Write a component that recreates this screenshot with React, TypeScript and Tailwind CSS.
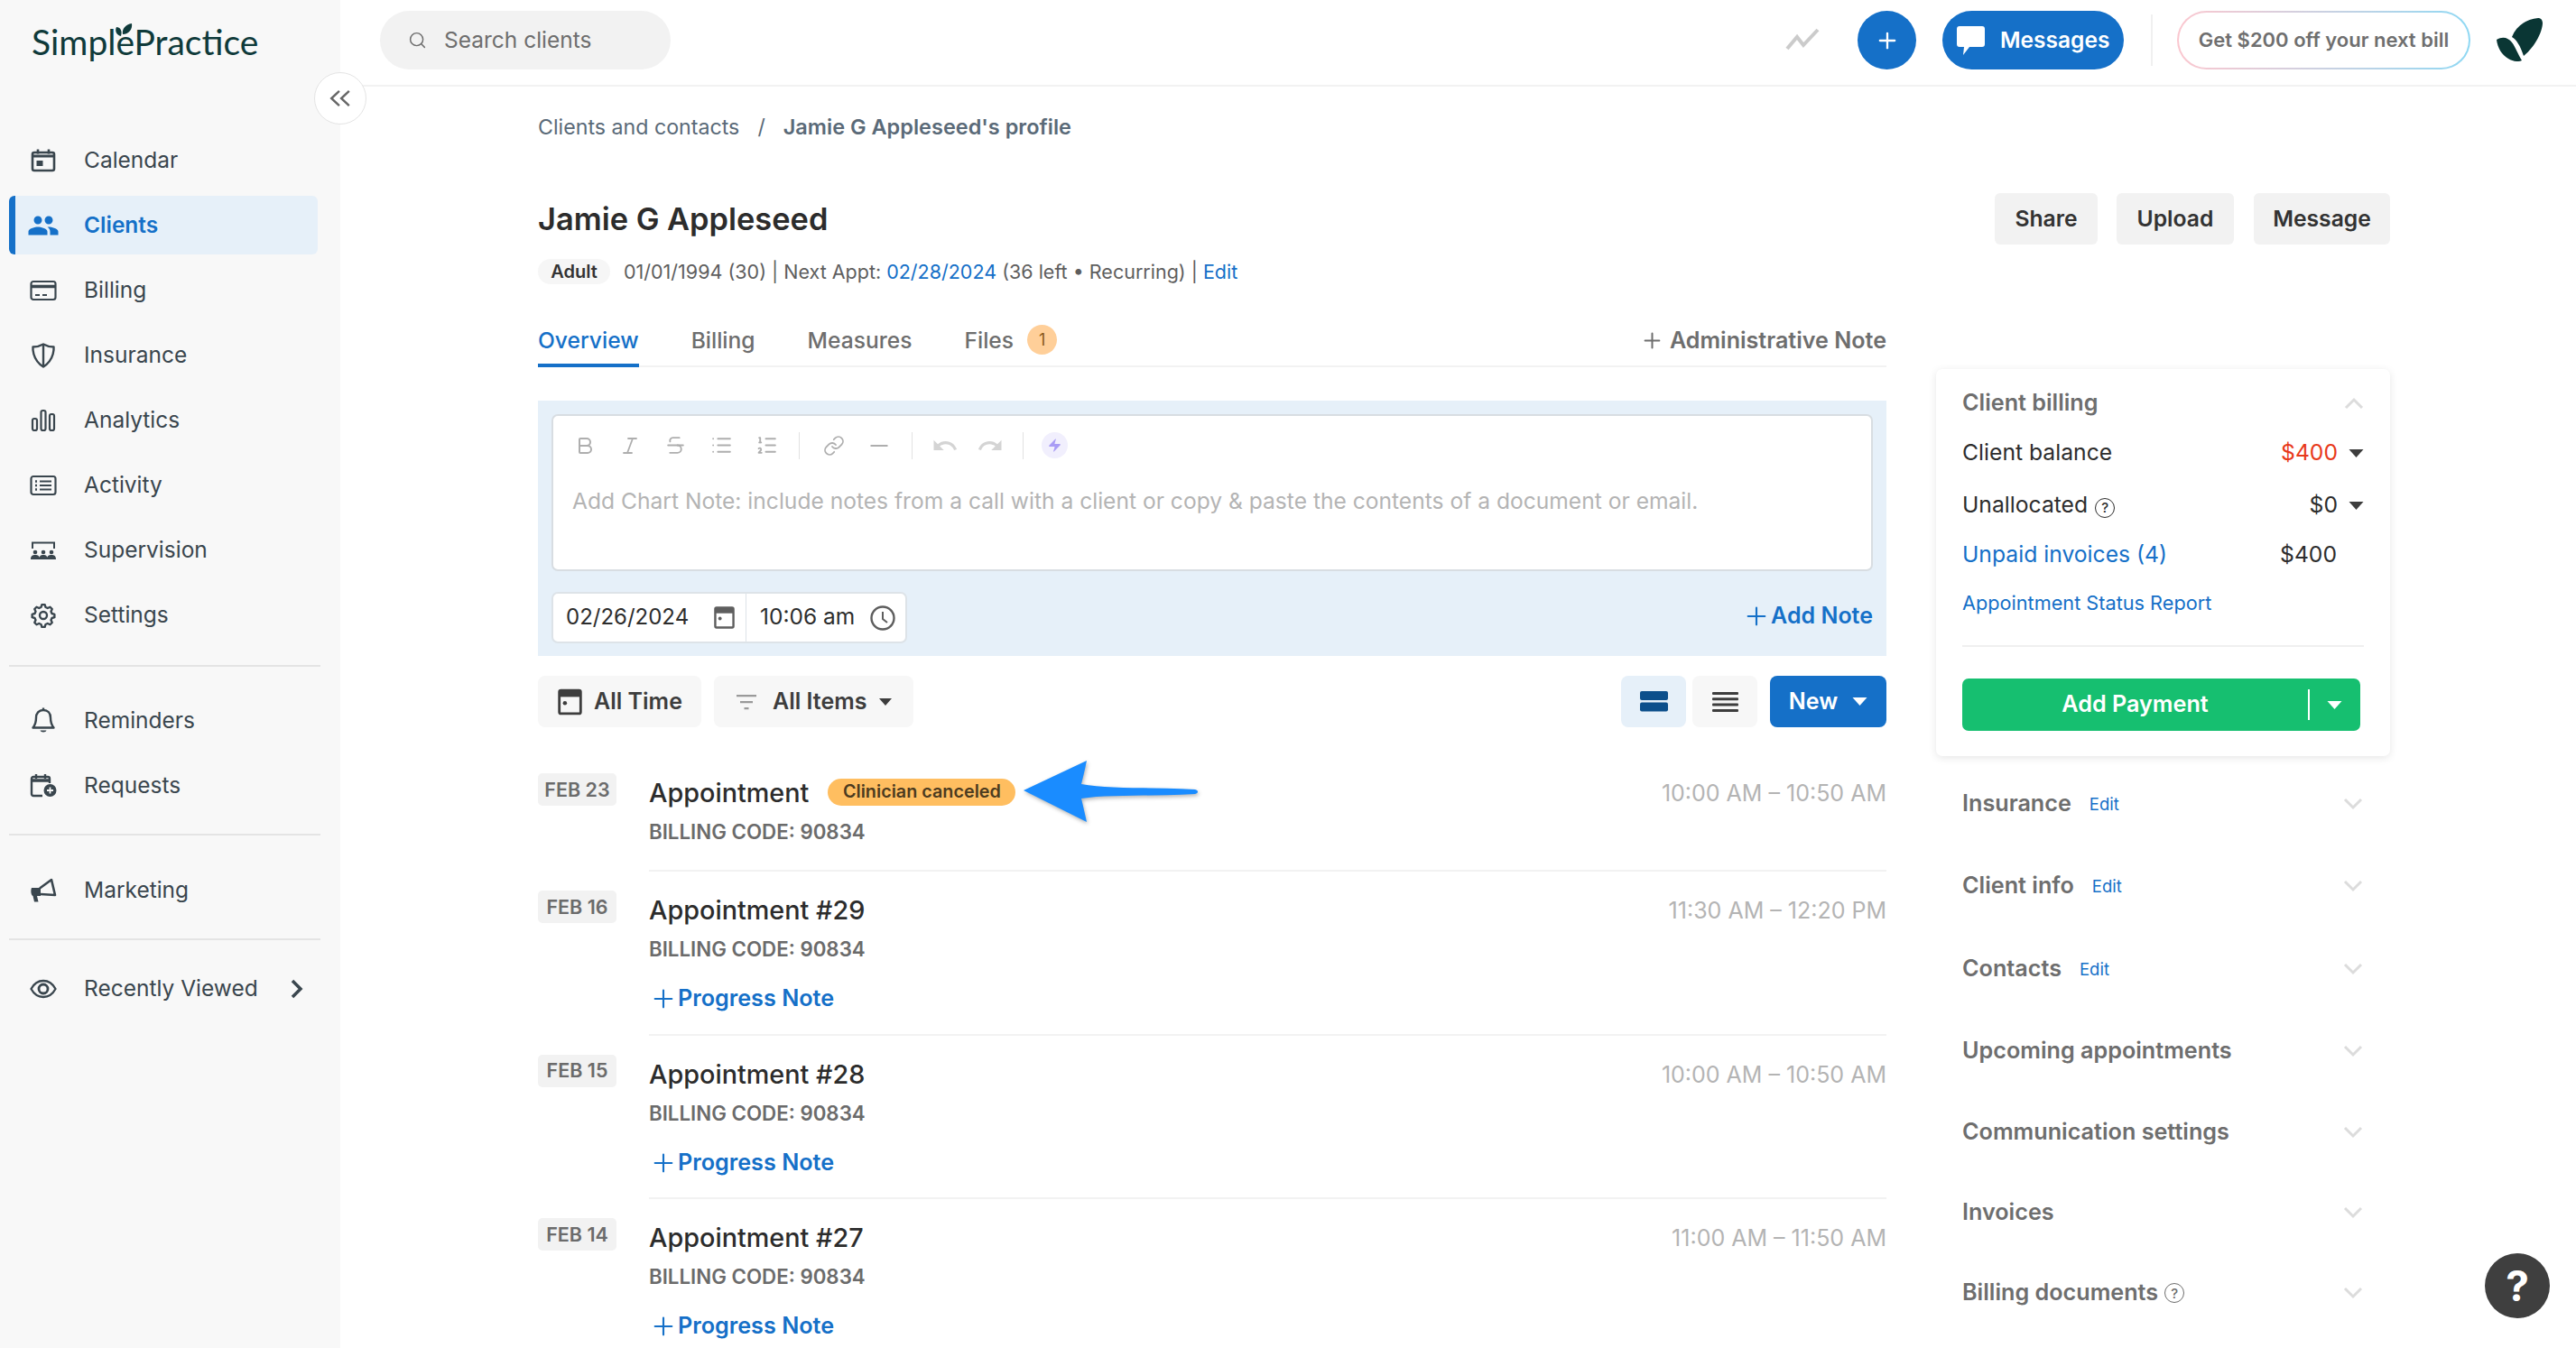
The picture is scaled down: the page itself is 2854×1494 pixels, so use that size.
import { Bold, Italic, Link, List, ListOrdered, Minus, Plus, Search, Strikethrough, Zap } from "lucide-react";
import { MdPeople, MdRedo, MdUndo } from "react-icons/md";
import type { ReactNode } from "react";

const CalendarIcon = () => (
  <svg width="28" height="28" viewBox="0 0 28 28" fill="none" stroke="currentColor" strokeWidth="2.6">
    <rect x="2" y="5" width="24" height="20" rx="2" />
    <path d="M2 9h24" strokeWidth="3" />
    <path d="M8 1.5v5M20 1.5v5" />
    <rect x="6.5" y="14" width="7" height="6" fill="currentColor" stroke="none" />
  </svg>
);

const CardIcon = () => (
  <svg width="30" height="28" viewBox="0 0 30 28" fill="none" stroke="currentColor" strokeWidth="2.2">
    <rect x="1.5" y="4" width="27" height="20" rx="2.5" />
    <path d="M1.5 9.5h27" strokeWidth="3.5" />
    <path d="M6 19h5M14 19h5" />
  </svg>
);

const ShieldIcon = () => (
  <svg width="28" height="28" viewBox="0 0 28 28" fill="none" stroke="currentColor" strokeWidth="2.4" strokeLinejoin="round">
    <path d="M14 1.5c-3.5 2-7.5 3-11.5 3 0 0-1.5 14 11.5 22 13-8 11.500-22 11.500-22-4 0-8-1-11.500-3z" />
    <path d="M14 1.5v25" />
  </svg>
);

const BarsIcon = () => (
  <svg width="28" height="28" viewBox="0 0 28 28" fill="none" stroke="currentColor" strokeWidth="2.2">
    <rect x="2" y="12" width="5" height="13" rx="2" />
    <rect x="11.5" y="3" width="5" height="22" rx="2" />
    <rect x="21" y="7" width="5" height="18" rx="2" />
  </svg>
);

const ActivityIcon = () => (
  <svg width="30" height="28" viewBox="0 0 30 28" fill="none" stroke="currentColor" strokeWidth="2.2">
    <rect x="1.5" y="4" width="27" height="20" rx="2.5" />
    <path d="M11 9.5h13M11 14h13M11 18.5h13" />
    <path d="M6 9.5h2M6 14h2M6 18.5h2" strokeWidth="2.6" />
  </svg>
);

const SupervisionIcon = () => (
  <svg width="30" height="28" viewBox="0 0 30 28" fill="currentColor">
    <path d="M3 12V5.500h24V12" fill="none" stroke="currentColor" strokeWidth="2" />
    <circle cx="6" cy="16" r="2.3" />
    <circle cx="15" cy="16" r="2.3" />
    <circle cx="24" cy="16" r="2.3" />
    <path d="M1 24c0-4 2-5 5-5s5 1 5 5zM10.5 24c0-4 1.500-5 4.500-5s4.500 1 4.500 5zM19 24c0-4 2-5 5-5s5 1 5 5z" />
  </svg>
);

const GearIcon = () => (
  <svg width="30" height="30" viewBox="0 0 24 24" fill="none" stroke="currentColor" strokeWidth="1.9" strokeLinejoin="round">
    <path d="M10.700 2.500h2.600l.7 2.300 1.800.8 2.200-1 1.800 1.800-1 2.200.8 1.800 2.300.7v2.600l-2.300.7-.8 1.800 1 2.200-1.800 1.800-2.200-1-1.800.8-.7 2.300h-2.600l-.7-2.300-1.800-.8-2.200 1-1.800-1.800 1-2.200-.8-1.800-2.300-.7v-2.600l2.300-.7.800-1.800-1-2.200 1.800-1.800 2.200 1 1.800-.8z" />
    <circle cx="12" cy="12" r="3.2" />
  </svg>
);

const BellIcon = () => (
  <svg width="28" height="30" viewBox="0 0 28 30" fill="none" stroke="currentColor" strokeWidth="2.4" strokeLinejoin="round">
    <path d="M14 3c-5 0-8 3.500-8 8.500 0 6-1.500 8.500-3.500 11h23c-2-2.500-3.500-5-3.500-11C22 6.500 19 3 14 3z" />
    <path d="M14 .5v3" />
    <path d="M10.5 25.500c.5 2.500 6.500 2.500 7 0z" fill="currentColor" stroke="none" />
  </svg>
);

const RequestIcon = () => (
  <svg width="30" height="28" viewBox="0 0 30 28" fill="none">
    <path d="M14 25H4a2 2 0 0 1-2-2V6a2 2 0 0 1 2-2h16a2 2 0 0 1 2 2v5" stroke="currentColor" strokeWidth="2.4" />
    <path d="M2 8h20" stroke="currentColor" strokeWidth="3.5" />
    <path d="M7 1v5M17 1v5" stroke="currentColor" strokeWidth="2.4" />
    <circle cx="22.5" cy="19" r="7" fill="currentColor" />
    <path d="M22.5 15.500v7M19 19h7" stroke="#f8f8f8" strokeWidth="1.8" />
  </svg>
);

const MegaphoneIcon = () => (
  <svg width="30" height="30" viewBox="0 0 30 30" fill="none">
    <path d="M2 12h10v9H8l1.500 6.500H5L3.500 21C1 20 1 14 2 12z" fill="currentColor" />
    <path d="M11 12.500L24 3l4 17-16-1" stroke="currentColor" strokeWidth="2.6" strokeLinejoin="round" />
  </svg>
);

const EyeIcon = () => (
  <svg width="30" height="28" viewBox="0 0 30 28" fill="none" stroke="currentColor" strokeWidth="2.3">
    <path d="M1.5 14C5 7.500 10 5 15 5s10 2.500 13.500 9C25 20.500 20 23 15 23S5 20.500 1.500 14z" />
    <circle cx="15" cy="14" r="5" strokeWidth="2.8" />
  </svg>
);

const CalendarSmall = ({ className }: { className: string }) => (
  <svg className={className} viewBox="0 0 24 26" fill="none" stroke="currentColor" strokeWidth="2.5">
    <rect x="1.5" y="1.500" width="21" height="23" rx="1.5" />
    <path d="M1.5 5h21" strokeWidth="6" />
    <circle cx="7" cy="14" r="2" fill="currentColor" stroke="none" />
  </svg>
);

const Caret = ({ className }: { className: string }) => (
  <svg className={className} viewBox="0 0 16 9" fill="currentColor">
    <path d="M0 0h16L8 9z" />
  </svg>
);

const Chevron = ({ up }: { up?: boolean }) => (
  <svg width="22" height="14" viewBox="0 0 22 14" fill="none" stroke="#dcdcdc" strokeWidth="3">
    <path d={up ? "M2 12l9-9 9 9" : "M2 2l9 9 9-9"} />
  </svg>
);

const HelpDot = () => (
  <span className="inline-flex h-[22px] w-[22px] items-center justify-center rounded-full border-[1.5px] border-current text-[15px] leading-none font-medium">?</span>
);

const navTop = [
  { label: "Calendar", icon: <CalendarIcon /> },
  { label: "Clients", icon: <MdPeople size={36} />, active: true },
  { label: "Billing", icon: <CardIcon /> },
  { label: "Insurance", icon: <ShieldIcon /> },
  { label: "Analytics", icon: <BarsIcon /> },
  { label: "Activity", icon: <ActivityIcon /> },
  { label: "Supervision", icon: <SupervisionIcon /> },
  { label: "Settings", icon: <GearIcon /> },
];

function NavItem({ label, icon, active, children }: { label: string; icon: ReactNode; active?: boolean; children?: ReactNode }) {
  return (
    <div
      className={`mb-[7px] ml-[10px] flex h-[65px] w-[342px] items-center rounded-[6px] ${
        active ? "border-l-[7px] border-[#1570c8] bg-[#e6f0f9] text-[#1570c8] font-semibold" : "text-[#3a464e]"
      }`}
    >
      <span className={`flex w-[38px] shrink-0 justify-center ${active ? "ml-[12px]" : "ml-[19px]"}`}>{icon}</span>
      <span className="ml-[26px] text-[24.5px] whitespace-nowrap">{label}</span>
      {children}
    </div>
  );
}

function Sidebar() {
  return (
    <aside className="relative flex w-[377px] shrink-0 flex-col bg-[#f8f8f8]">
      <div className="relative h-[145px] pt-[24px] pl-[35px]">
        <span className="text-[39px] leading-[44px] text-[#0f3a3a] [font-family:Lato,sans-serif]">SimplePractice</span>
        <svg className="absolute top-[25px] left-[125px]" width="22" height="16" viewBox="0 0 22 16" fill="#0f3a3a">
          <path d="M9 15C4 14 2 9 4 5c4 0 7 4 5 10zM11 13C10 7 14 2 21 1c1 6-3 12-10 12z" />
        </svg>
      </div>
      {navTop.map((item) => (
        <NavItem key={item.label} {...item} />
      ))}
      <div className="mt-[16px] ml-[10px] h-[2px] w-[345px] bg-[#e4e4e4]" />
      <div className="mt-[27px]">
        <NavItem label="Reminders" icon={<BellIcon />} />
        <NavItem label="Requests" icon={<RequestIcon />} />
      </div>
      <div className="mt-[14px] ml-[10px] h-[2px] w-[345px] bg-[#e4e4e4]" />
      <div className="mt-[28px]">
        <NavItem label="Marketing" icon={<MegaphoneIcon />} />
      </div>
      <div className="mt-[14px] ml-[10px] h-[2px] w-[345px] bg-[#e4e4e4]" />
      <div className="mt-[21px]">
        <NavItem label="Recently Viewed" icon={<EyeIcon />}>
          <svg className="ml-[36px]" width="14" height="22" viewBox="0 0 14 22" fill="none" stroke="#3a464e" strokeWidth="3.5">
            <path d="M2 2l9 9-9 9" />
          </svg>
        </NavItem>
      </div>
      <button className="absolute top-[80px] left-[348px] flex h-[58px] w-[58px] items-center justify-center rounded-full border border-[#e4e4e4] bg-white text-[#666]">
        <svg width="24" height="20" viewBox="0 0 22 18" fill="none" stroke="currentColor" strokeWidth="2.2">
          <path d="M10 1.500L2 9l8 7.500M20 1.500L12 9l8 7.500" />
        </svg>
      </button>
    </aside>
  );
}

function Header() {
  return (
    <header className="flex h-[96px] shrink-0 items-start border-b-2 border-[#f2f2f2] pt-[12px] pr-[37px] pl-[44px]">
      <div className="flex h-[65px] w-[322px] items-center rounded-full bg-[#f2f2f2] pl-[31px] text-[24.5px] text-[#6e6e6e]">
        <Search size={21} strokeWidth={1.7} />
        <span className="ml-[19px]">Search clients</span>
      </div>
      <svg className="mt-[18px] ml-auto" width="38" height="26" viewBox="0 0 38 26" fill="none" stroke="#cbcbcb" strokeWidth="4">
        <path d="M2 24l11-13 7 9L36 3" />
      </svg>
      <div className="ml-[42px] flex h-[65px] w-[65px] items-center justify-center rounded-full bg-[#1570c8] text-white">
        <Plus size={28} strokeWidth={2} />
      </div>
      <div className="ml-[29px] flex h-[65px] w-[201px] items-center rounded-full bg-[#1570c8] pl-[16px] text-[24.5px] font-semibold text-white">
        <svg width="31" height="34" viewBox="0 0 31 34" fill="white">
          <path d="M3 1h25a3 3 0 0 1 3 3v17a3 3 0 0 1-3 3H14l-7 9 1-9H3a3 3 0 0 1-3-3V4a3 3 0 0 1 3-3z" />
        </svg>
        <span className="ml-[17px]">Messages</span>
      </div>
      <div className="mt-[4px] ml-[30px] h-[57px] w-[2px] bg-[#f0f0f0]" />
      <div className="ml-[27px] h-[65px] w-[325px] rounded-full bg-linear-to-r from-[#fbc7cf] to-[#8ed8f3] p-[2px]">
        <div className="flex h-full items-center justify-center rounded-full bg-white text-[22px] font-semibold text-[#6f6f6f]">
          Get $200 off your next bill
        </div>
      </div>
      <svg className="mt-[8px] ml-[29px]" width="51" height="48" viewBox="0 0 51 48" fill="#0a3634">
        <path d="M46 0C34 1 22 8 17 21c5 3 9 9 13 21 8-6 20-22 21-36 0-4-2-6-5-6z" />
        <path d="M0 24c7-4 13-2 17 3 4 5 7 14 11 20-4 2-10 1-15-2C6 41 1 33 0 24z" />
      </svg>
    </header>
  );
}

const tools = [
  { key: "b", icon: <Bold size={24} strokeWidth={2} />, width: "w-[50px]" },
  { key: "i", icon: <Italic size={24} strokeWidth={1.8} />, width: "w-[49px]" },
  { key: "s", icon: <Strikethrough size={25} strokeWidth={1.8} />, width: "w-[52px]" },
  { key: "ul", icon: <List size={25} strokeWidth={1.8} />, width: "w-[50px]" },
  { key: "ol", icon: <ListOrdered size={25} strokeWidth={1.8} />, width: "w-[50px]" },
];

function Composer() {
  return (
    <div className="mt-[37px] h-[283px] bg-[#e6f0f9] px-[15px] pt-[15px]">
      <div className="h-[174px] rounded-[7px] border-2 border-[#d8dde2] bg-white">
        <div className="flex h-[65px] items-center pl-[10px] text-[#aeaeae]">
          {tools.map((t) => (
            <span key={t.key} className={`flex justify-center ${t.width}`}>
              {t.icon}
            </span>
          ))}
          <span className="ml-[11px] h-[30px] w-[1px] bg-[#e2e2e2]" />
          <span className="ml-[25px] flex w-[26px] justify-center">
            <Link size={24} strokeWidth={1.8} />
          </span>
          <span className="ml-[12px] flex w-[50px] justify-center">
            <Minus size={30} strokeWidth={1.6} />
          </span>
          <span className="ml-[11px] h-[30px] w-[1px] bg-[#e2e2e2]" />
          <span className="ml-[21px] flex w-[30px] justify-center text-[#d4d4d4]">
            <MdUndo size={34} />
          </span>
          <span className="ml-[20px] flex w-[30px] justify-center text-[#d4d4d4]">
            <MdRedo size={34} />
          </span>
          <span className="ml-[21px] h-[30px] w-[1px] bg-[#e2e2e2]" />
          <span className="ml-[20px] flex h-[29px] w-[29px] items-center justify-center rounded-full bg-[#f1effd] text-[#a99cf5]">
            <Zap size={17} fill="currentColor" strokeWidth={0} />
          </span>
        </div>
        <p className="pt-[12px] pl-[21px] text-[24.6px] leading-[34px] text-[#b4b4b4]">
          Add Chart Note: include notes from a call with a client or copy &amp; paste the contents of a document or email.
        </p>
      </div>
      <div className="mt-[23px] flex items-center justify-between">
        <div className="flex h-[57px] w-[394px] items-center rounded-[7px] border-2 border-[#dde3e8] bg-white text-[24.5px] text-[#2d2d2d]">
          <span className="ml-[14px] w-[164px] pb-[2px] text-[24px]">02/26/2024</span>
          <CalendarSmall className="h-[25px] w-[23px] text-[#5e5e5e]" />
          <span className="ml-[12px] h-full w-[1px] bg-[#dde3e8]" />
          <span className="ml-[15px] w-[122px] pb-[2px]">10:06 am</span>
          <svg width="28" height="28" viewBox="0 0 28 28" fill="none" stroke="#5e5e5e" strokeWidth="2.4">
            <circle cx="14" cy="14" r="12.5" />
            <path d="M14 7v8l5 4" strokeWidth="2" />
          </svg>
        </div>
        <span className="flex items-center pb-[4px] text-[25px] font-semibold text-[#1570c8]">
          <Plus size={32} strokeWidth={1.6} />
          Add Note
        </span>
      </div>
    </div>
  );
}

function Filters() {
  return (
    <div className="mt-[22px] flex h-[57px] text-[25px] font-semibold text-[#3d3d3d]">
      <div className="flex w-[181px] items-center rounded-[8px] bg-[#f7f7f7] pl-[22px]">
        <CalendarSmall className="h-[30px] w-[27px] text-[#3d3d3d]" />
        <span className="ml-[13px]">All Time</span>
      </div>
      <div className="ml-[14px] flex w-[221px] items-center rounded-[8px] bg-[#f7f7f7] pl-[24px]">
        <svg width="24" height="18" viewBox="0 0 24 18" fill="#9a9a9a">
          <path d="M1 1h22v2.200H1zM5 8h14v2.200H5zM9.500 15h5v2.200h-5z" />
        </svg>
        <span className="ml-[17px]">All Items</span>
        <Caret className="ml-[14px] h-[8px] w-[14px] text-[#3d3d3d]" />
      </div>
      <div className="ml-auto flex h-full w-[72px] items-center justify-center rounded-[8px] bg-[#e6f0f9]">
        <svg width="31" height="23" viewBox="0 0 31 23" fill="#0c4f8b">
          <rect width="31" height="10" rx="2" />
          <rect y="12.5" width="31" height="10" rx="2" />
        </svg>
      </div>
      <div className="ml-[7px] flex h-full w-[72px] items-center justify-center rounded-[8px] bg-[#f7f7f7]">
        <svg width="29" height="22" viewBox="0 0 29 22" fill="#3d3d3d">
          <rect width="29" height="3" rx="1" />
          <rect y="6.3" width="29" height="3" rx="1" />
          <rect y="12.6" width="29" height="3" rx="1" />
          <rect y="19" width="29" height="3" rx="1" />
        </svg>
      </div>
      <div className="ml-[14px] flex h-full w-[129px] items-center justify-center rounded-[8px] bg-[#1570c8] text-white">
        New
        <Caret className="ml-[16px] h-[9px] w-[17px] text-white" />
      </div>
    </div>
  );
}

const appts = [
  { date: "FEB 23", title: "Appointment", time: "10:00 AM – 10:50 AM", canceled: true },
  { date: "FEB 16", title: "Appointment #29", time: "11:30 AM – 12:20 PM" },
  { date: "FEB 15", title: "Appointment #28", time: "10:00 AM – 10:50 AM" },
  { date: "FEB 14", title: "Appointment #27", time: "11:00 AM – 11:50 AM" },
];

function ApptRow({ date, title, time, canceled }: { date: string; title: string; time: string; canceled?: boolean }) {
  return (
    <div className={`flex pt-[21px] ${canceled ? "h-[130px]" : "h-[181.5px]"}`}>
      <span className="flex h-[36px] w-[87px] shrink-0 items-center justify-center rounded-[5px] bg-[#f2f2f2] text-[21.5px] font-semibold text-[#6b6b6b]">
        {date}
      </span>
      <div className="-mt-[21px] ml-[36px] flex-1 border-b-2 border-[#f2f2f2] pt-[21px]">
        <div className="flex h-[44px] items-center">
          <span className="text-[28.8px] font-medium text-[#2c2c2c]">{title}</span>
          {canceled && (
            <span className="relative ml-[21px] flex h-[30px] w-[208px] -translate-y-[1px] items-center justify-center rounded-full bg-[#ffbe60] text-[19.8px] font-semibold text-[#4c3b1f]">
              Clinician canceled
              <svg className="absolute top-[-22px] left-[217px] drop-shadow-[1px_2px_2px_rgba(0,0,0,0.3)]" width="196" height="72" viewBox="0 0 196 72" fill="#1a8cff">
                <path d="M0 35L70 2c-2 10-4 18-6 26 30 6 80 3 126 6 4 1 4 4 0 5-46 3-96 0-126 5 2 8 4 17 6 26z" />
              </svg>
            </span>
          )}
          <span className="mt-[2px] ml-auto text-[25px] text-[#b4b4b4]">{time}</span>
        </div>
        <div className="mt-[6px] h-[30px] text-[22.3px] leading-[30px] font-semibold text-[#6b6b6b]">BILLING CODE: 90834</div>
        {!canceled && (
          <div className="mt-[24px] flex h-[32px] items-center text-[25.2px] font-semibold text-[#1570c8]">
            <Plus size={32} strokeWidth={1.6} />
            Progress Note
          </div>
        )}
      </div>
    </div>
  );
}

const sections = [
  { label: "Insurance", edit: true, height: "h-[91px]" },
  { label: "Client info", edit: true, height: "h-[91px]" },
  { label: "Contacts", edit: true, height: "h-[93px]" },
  { label: "Upcoming appointments", height: "h-[90px]" },
  { label: "Communication settings", height: "h-[89px]" },
  { label: "Invoices", height: "h-[89px]" },
  { label: "Billing documents", help: true, height: "h-[89px]" },
];

function BillingCard() {
  return (
    <div className="mt-[138px] h-[429px] rounded-[7px] pt-[19px] pr-[29px] pl-[29px] shadow-[0_2px_10px_rgba(0,0,0,0.1)]">
      <div className="flex h-[38px] items-center justify-between text-[25.2px] font-semibold text-[#6e6e6e]">
        Client billing
        <Chevron up />
      </div>
      <div className="mt-[18px] flex h-[36px] items-center justify-between text-[24.7px] text-[#2d2d2d]">
        Client balance
        <span className="flex items-center text-[#e8391a]">
          $400
          <Caret className="ml-[12px] h-[9px] w-[17px] text-[#3d3d3d]" />
        </span>
      </div>
      <div className="mt-[22px] flex h-[36px] items-center justify-between text-[24.7px] text-[#2d2d2d]">
        <span className="flex items-center">
          Unallocated
          <span className="ml-[8px]">
            <HelpDot />
          </span>
        </span>
        <span className="flex items-center">
          $0
          <Caret className="ml-[12px] h-[9px] w-[17px] text-[#3d3d3d]" />
        </span>
      </div>
      <div className="mt-[19px] flex h-[36px] items-center justify-between pr-[30px] text-[24.7px]">
        <span className="text-[#1570c8]">Unpaid invoices (4)</span>
        <span className="text-[#2d2d2d]">$400</span>
      </div>
      <div className="mt-[20px] text-[21.7px] leading-[30px] text-[#1570c8]">Appointment Status Report</div>
      <div className="mt-[32px] h-[2px] bg-[#f0f0f0]" />
      <div className="mt-[35px] flex h-[58px] w-[441px] items-center rounded-[7px] bg-[#16bf70] text-[25.2px] font-semibold text-white">
        <span className="w-[383px] text-center">Add Payment</span>
        <span className="h-[34px] w-[2px] bg-white" />
        <Caret className="ml-[19px] h-[9px] w-[17px] text-white" />
      </div>
    </div>
  );
}

export default function App() {
  return (
    <div className="relative flex h-[1494px] w-[2854px] overflow-hidden bg-white [font-family:Inter,sans-serif]">
      <Sidebar />
      <div className="flex min-w-0 flex-1 flex-col">
        <Header />
        <main className="ml-[219px] flex w-[2052px]">
          <div className="w-[1494px] shrink-0">
            <div className="mt-[29px] flex h-[32px] items-center text-[23.2px] text-[#5a6a78]">
              Clients and contacts
              <span className="mx-[20px] font-normal">/</span>
              <span className="text-[23.5px] font-semibold">Jamie G Appleseed's profile</span>
            </div>
            <h1 className="mt-[66px] text-[34.4px] leading-[40px] font-semibold text-[#2c2c2c]">Jamie G Appleseed</h1>
            <div className="mt-[24px] flex h-[28px] items-center text-[21.5px] text-[#5e5e5e]">
              <span className="flex h-[28px] w-[80px] items-center justify-center rounded-full bg-[#f6f6f6] text-[20px] font-semibold text-[#333]">Adult</span>
              <span className="ml-[15px]">
                01/01/1994 (30) | Next Appt: <span className="text-[#1570c8]">02/28/2024</span> (36 left • Recurring) | <span className="text-[#1570c8]">Edit</span>
              </span>
            </div>
            <div className="mt-[30px] flex h-[62px] items-start border-b-2 border-[#f2f2f2] text-[24.6px] font-medium text-[#6e6e6e]">
              <span className="-mb-[2px] flex h-[62px] items-start border-b-4 border-[#1570c8] pt-[14px] text-[#1570c8]">Overview</span>
              <span className="ml-[58px] pt-[14px]">Billing</span>
              <span className="ml-[58px] pt-[14px]">Measures</span>
              <span className="ml-[58px] pt-[14px]">Files</span>
              <span className="mt-[15px] ml-[15px] flex h-[33px] w-[33px] items-center justify-center rounded-full bg-[#ffcf99] text-[18px] font-normal text-[#8a5a1a]">1</span>
              <span className="ml-auto flex items-center pt-[14px] text-[25.1px] font-semibold">
                <Plus size={27} strokeWidth={1.8} className="mr-[6px]" />
                Administrative Note
              </span>
            </div>
            <Composer />
            <Filters />
            <div className="mt-[30px]">
              {appts.map((a) => (
                <ApptRow key={a.date} {...a} />
              ))}
            </div>
          </div>
          <div className="ml-[55px] w-[503px] shrink-0">
            <div className="mt-[118px] flex h-[57px] justify-end text-[24.7px] font-semibold text-[#333]">
              <span className="flex w-[114px] items-center justify-center rounded-[6px] bg-[#f2f2f2]">Share</span>
              <span className="ml-[21px] flex w-[130px] items-center justify-center rounded-[6px] bg-[#f2f2f2]">Upload</span>
              <span className="ml-[22px] flex w-[151px] items-center justify-center rounded-[6px] bg-[#f2f2f2]">Message</span>
            </div>
            <BillingCard />
            <div className="mt-[7px] pr-[30px] pl-[29px]">
              {sections.map((s) => (
                <div key={s.label} className={`flex items-center ${s.height}`}>
                  <span className="text-[25.2px] font-semibold text-[#6e6e6e]">{s.label}</span>
                  {s.edit && <span className="mt-[2px] ml-[20px] text-[18.5px] text-[#1570c8]">Edit</span>}
                  {s.help && (
                    <span className="ml-[7px] text-[#6e6e6e]">
                      <HelpDot />
                    </span>
                  )}
                  <span className="ml-auto">
                    <Chevron />
                  </span>
                </div>
              ))}
            </div>
          </div>
        </main>
      </div>
      <div className="absolute right-[29px] bottom-[33px] flex h-[72px] w-[72px] items-center justify-center rounded-full bg-[#3f3f3f] text-[46px] leading-none font-bold text-white">?</div>
    </div>
  );
}
